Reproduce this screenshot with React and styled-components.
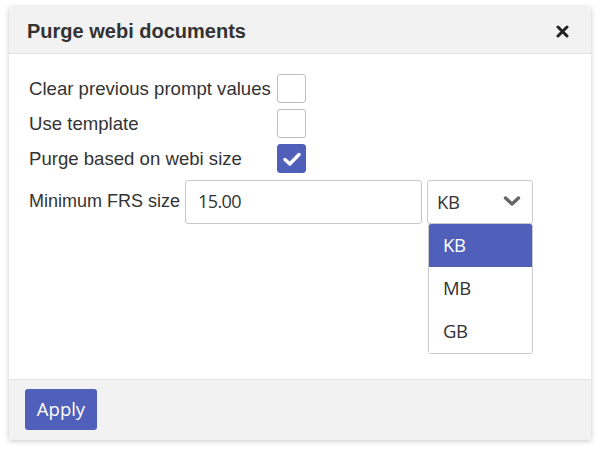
import React from "react";
import styled, { createGlobalStyle } from "styled-components";

const Global = createGlobalStyle`
  html, body { margin: 0; padding: 0; background: #fff; }
  body { width: 600px; height: 450px; overflow: hidden; }
`;

const Page = styled.div`
  padding: 7px 9px 0 9px;
`;

const Dialog = styled.div`
  width: 582px;
  height: 433px;
  display: flex;
  flex-direction: column;
  background: #fff;
  box-shadow: 0 1px 5px rgba(0, 0, 0, 0.22);
  font-family: "Liberation Sans", Arial, sans-serif;
  color: #333;
`;

const Header = styled.div`
  height: 46px;
  display: flex;
  align-items: center;
  justify-content: space-between;
  padding: 0 22px 0 18px;
  background: #f2f2f2;
  border-bottom: 1px solid #e2e2e2;
`;

const Title = styled.h1`
  margin: 2px 0 0 0;
  font-size: 20px;
  font-weight: bold;
  color: #333;
`;

const Close = styled.button`
  border: 0;
  background: none;
  padding: 0;
  margin-top: 2px;
  width: 14px;
  height: 14px;
  display: flex;
  align-items: center;
  justify-content: center;
`;

const Body = styled.div`
  flex: 1;
  padding: 20px 20px 0 20px;
  display: flex;
  flex-direction: column;
  gap: 6px;
`;

const CheckRow = styled.div`
  display: grid;
  grid-template-columns: 248px 29px;
  align-items: center;
  height: 29px;
`;

const Label = styled.span`
  font-size: 18.6px;
  color: #333;
  white-space: nowrap;
`;

const Box = styled.span`
  width: 29px;
  height: 29px;
  box-sizing: border-box;
  border-radius: 3px;
  border: 1px solid ${(p) => (p.$checked ? "#4f5fba" : "#bdbdbd")};
  background: ${(p) => (p.$checked ? "#4f5fba" : "#fff")};
  display: flex;
  align-items: center;
  justify-content: center;
`;

const FieldRow = styled.div`
  margin-top: 1px;
  display: flex;
  align-items: flex-start;
`;

const FieldLabel = styled(Label)`
  font-size: 18px;
  width: 156px;
  height: 44px;
  line-height: 42px;
`;

const Input = styled.div`
  width: 237px;
  height: 44px;
  box-sizing: border-box;
  border: 1px solid #c9c9c9;
  border-radius: 3px;
  padding: 0 0 2px 12px;
  display: flex;
  align-items: center;
  font-family: "Open Sans", "Liberation Sans", sans-serif;
  font-size: 18px;
  letter-spacing: -0.6px;
  color: #333;
`;

const SelectWrap = styled.div`
  position: relative;
  margin-left: 5px;
  width: 106px;
`;

const Select = styled.div`
  height: 44px;
  box-sizing: border-box;
  border: 1px solid #c9c9c9;
  border-radius: 3px;
  padding: 0 11px 2px 9px;
  display: flex;
  align-items: center;
  justify-content: space-between;
  font-family: "Open Sans", "Liberation Sans", sans-serif;
  font-size: 18.5px;
  letter-spacing: -0.4px;
  color: #333;
`;

const Menu = styled.ul`
  position: absolute;
  top: 43px;
  left: 1px;
  right: 0;
  margin: 0;
  padding: 0;
  list-style: none;
  background: #fff;
  border: 1px solid #c9c9c9;
  border-radius: 3px;
  overflow: hidden;
`;

const Item = styled.li`
  height: 43px;
  padding: 0 0 2px 14px;
  box-sizing: border-box;
  display: flex;
  align-items: center;
  font-family: "Open Sans", "Liberation Sans", sans-serif;
  font-size: 18.5px;
  letter-spacing: -0.4px;
  color: ${(p) => (p.$active ? "#fff" : "#333")};
  background: ${(p) => (p.$active ? "#4f5fba" : "#fff")};
`;

const Footer = styled.div`
  height: 61px;
  background: #f2f2f3;
  border-top: 1px solid #e6e6e6;
  padding: 9px 16px 0 16px;
  box-sizing: border-box;
`;

const Apply = styled.button`
  width: 72px;
  height: 41px;
  border: 0;
  border-radius: 3px;
  background: #4f5fba;
  color: #fff;
  font-family: "Open Sans", "Liberation Sans", sans-serif;
  font-size: 18.5px;
  padding: 0 0 3px 0;
`;

const Check = () => (
  <svg width="18" height="14" viewBox="0 0 18 14">
    <path d="M2 7.5 L6.8 12 L16 2.5" fill="none" stroke="#fff" strokeWidth="3.4" strokeLinecap="round" strokeLinejoin="round" />
  </svg>
);

const Chevron = () => (
  <svg width="18" height="12" viewBox="0 0 18 12">
    <path d="M2.5 3 L9 9 L15.5 3" fill="none" stroke="#666" strokeWidth="3.4" strokeLinecap="round" strokeLinejoin="round" />
  </svg>
);

const CloseIcon = () => (
  <svg width="13" height="13" viewBox="0 0 13 13">
    <path d="M2 2 L11 11 M11 2 L2 11" stroke="#222" strokeWidth="3" strokeLinecap="round" />
  </svg>
);

export default function App() {
  return (
    <>
      <Global />
      <Page>
        <Dialog>
          <Header>
            <Title>Purge webi documents</Title>
            <Close aria-label="Close"><CloseIcon /></Close>
          </Header>
          <Body>
            <CheckRow>
              <Label>Clear previous prompt values</Label>
              <Box />
            </CheckRow>
            <CheckRow>
              <Label>Use template</Label>
              <Box />
            </CheckRow>
            <CheckRow>
              <Label>Purge based on webi size</Label>
              <Box $checked><Check /></Box>
            </CheckRow>
            <FieldRow>
              <FieldLabel>Minimum FRS size</FieldLabel>
              <Input>15.00</Input>
              <SelectWrap>
                <Select>
                  <span>KB</span>
                  <Chevron />
                </Select>
                <Menu>
                  <Item $active>KB</Item>
                  <Item>MB</Item>
                  <Item>GB</Item>
                </Menu>
              </SelectWrap>
            </FieldRow>
          </Body>
          <Footer>
            <Apply>Apply</Apply>
          </Footer>
        </Dialog>
      </Page>
    </>
  );
}
